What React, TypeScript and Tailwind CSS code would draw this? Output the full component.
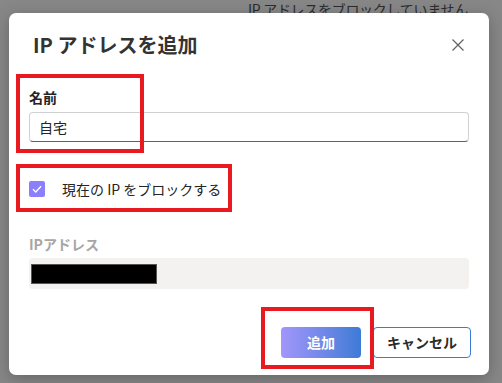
import { useState } from 'react';

const jp = { fontFamily: '"Noto Sans CJK JP", "Noto Sans", sans-serif' };

export default function App() {
  const [name, setName] = useState('自宅');
  const [blockCurrent, setBlockCurrent] = useState(true);

  return (
    <div className="relative h-[383px] w-[502px] overflow-hidden bg-[#878787]" style={jp}>
      {/* page behind the overlay */}
      <p className="pl-[248px] text-[14px] leading-[18px] tracking-[-0.3px] text-[#2b2b2b]">IP アドレスをブロックしていません</p>

      <div className="absolute left-[9px] top-[13px] flex h-[362px] w-[480px] flex-col rounded-[7px] bg-white px-[20px] pt-[18px] pb-[17px] shadow-[0_4px_16px_rgba(0,0,0,0.25)]">
        <div className="flex h-[28px] items-center justify-between pl-[4px] pr-[1px]">
          <h2 className="text-[20px] font-bold leading-[28px] text-[#333]">IP アドレスを追加</h2>
          <button type="button" className="flex h-[20px] w-[20px] items-center justify-center text-[#616161]">
            <svg width="12" height="12" viewBox="0 0 12 12" fill="none" stroke="currentColor" strokeWidth="1.2">
              <path d="M0.5 0.5 11.5 11.5M11.5 0.5 0.5 11.5" />
            </svg>
          </button>
        </div>

        <label className="mt-[28px] mb-[5px] block text-[14px] font-bold leading-[20px] text-[#242424]">名前</label>
        <input
          value={name}
          onChange={(e) => setName(e.target.value)}
          className="h-[30px] w-full rounded-[4px] border border-[#d1d1d1] border-b-[#616161] px-[9px] text-[14px] text-[#242424] outline-none"
          style={jp}
        />

        <label className="mt-[37px] flex h-[20px] cursor-pointer items-center">
          <button
            type="button"
            onClick={() => setBlockCurrent(!blockCurrent)}
            className={
              blockCurrent
                ? 'flex h-[16px] w-[16px] items-center justify-center rounded-[2px] bg-[#8b80f9]'
                : 'flex h-[16px] w-[16px] items-center justify-center rounded-[2px] border border-[#616161] bg-white'
            }
          >
            {blockCurrent && (
              <svg width="12" height="12" viewBox="0 0 12 12" fill="none" stroke="white" strokeWidth="1.3">
                <path d="M2 6.2 4.8 9 10 3.2" />
              </svg>
            )}
          </button>
          <span className="ml-[17px] text-[14px] leading-[20px] text-[#242424]">現在の IP をブロックする</span>
        </label>

        <label className="mt-[35px] mb-[4px] block text-[14px] font-bold leading-[20px] text-[#a6a6a6]">IPアドレス</label>
        <div className="flex h-[31px] w-full items-center rounded-[4px] bg-[#f3f2f1] pl-[2px]">
          <div className="h-[20px] w-[126px] border border-[#555] bg-black" />
        </div>

        <div className="-mr-[2px] mt-[38px] flex justify-end gap-[12px]">
          <button
            type="button"
            className="h-[31px] w-[80px] rounded-[4px] bg-gradient-to-r from-[#a196fb] to-[#3b7bd6] text-[14px] font-bold text-white"
          >
            追加
          </button>
          <button
            type="button"
            className="h-[31px] w-[98px] rounded-[4px] border border-[#3b7bd6] bg-white text-[14px] font-bold text-[#2b2b2b]"
          >
            キャンセル
          </button>
        </div>

        {/* annotation boxes */}
        <div className="pointer-events-none absolute left-[7px] top-[61px] h-[79px] w-[128px] border-[4px] border-[#e8191f]" />
        <div className="pointer-events-none absolute left-[7px] top-[151px] h-[48px] w-[216px] border-[4px] border-[#e8191f]" />
        <div className="pointer-events-none absolute left-[252px] top-[294px] h-[62px] w-[113px] border-[4px] border-[#e8191f]" />
      </div>
    </div>
  );
}
